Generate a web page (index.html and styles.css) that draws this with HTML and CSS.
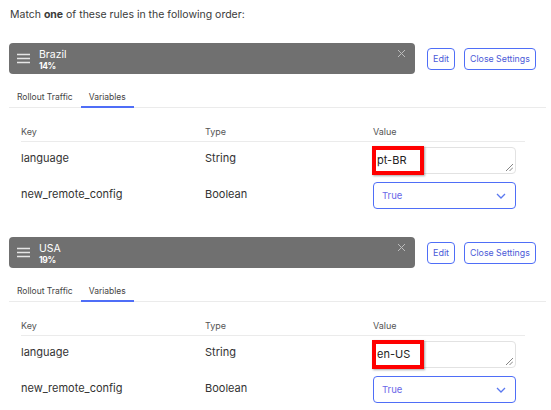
FILE: index.html
```html
<!DOCTYPE html>
<html>
<head>
<meta charset="utf-8">
<link rel="stylesheet" href="styles.css">
</head>
<body>
<div class="page">
  <p class="intro">Match <b>one</b> of these rules in the following order:</p>

  <section class="rule">
    <div class="rule-head">
      <div class="bar">
        <svg class="menu" width="13" height="11" viewBox="0 0 13 11"><path d="M0 1.5h13M0 5.5h13M0 9.5h13" stroke="#e6e6e6" stroke-width="1.4"/></svg>
        <div class="bar-text">
          <div class="bar-title">Brazil</div>
          <div class="bar-pct">14%</div>
        </div>
        <svg class="close" width="9" height="9" viewBox="0 0 9 9"><path d="M1 1l7 7M8 1l-7 7" stroke="#bdbdbd" stroke-width="1"/></svg>
      </div>
      <button class="btn">Edit</button>
      <button class="btn">Close Settings</button>
    </div>
    <div class="tabs">
      <div class="tab">Rollout Traffic</div>
      <div class="tab active">Variables</div>
    </div>
    <div class="table">
      <div class="thead">
        <div class="c-key">Key</div><div class="c-type">Type</div><div class="c-val">Value</div>
      </div>
      <div class="trow r1">
        <div class="c-key">language</div><div class="c-type">String</div>
        <div class="c-val"><div class="ta"><span class="hl">pt-BR</span><svg class="grip" width="7" height="7" viewBox="0 0 7 7"><path d="M7 0L0 7M7 3.5L3.5 7" stroke="#666" stroke-width="0.8"/></svg></div></div>
      </div>
      <div class="trow r2">
        <div class="c-key">new_remote_config</div><div class="c-type">Boolean</div>
        <div class="c-val"><div class="sel"><span>True</span><svg width="10" height="6" viewBox="0 0 10 6"><path d="M1 1l4 4 4-4" fill="none" stroke="#5a78f0" stroke-width="1.3"/></svg></div></div>
      </div>
    </div>
  </section>

  <section class="rule second">
    <div class="rule-head">
      <div class="bar">
        <svg class="menu" width="13" height="11" viewBox="0 0 13 11"><path d="M0 1.5h13M0 5.5h13M0 9.5h13" stroke="#e6e6e6" stroke-width="1.4"/></svg>
        <div class="bar-text">
          <div class="bar-title">USA</div>
          <div class="bar-pct">19%</div>
        </div>
        <svg class="close" width="9" height="9" viewBox="0 0 9 9"><path d="M1 1l7 7M8 1l-7 7" stroke="#bdbdbd" stroke-width="1"/></svg>
      </div>
      <button class="btn">Edit</button>
      <button class="btn">Close Settings</button>
    </div>
    <div class="tabs">
      <div class="tab">Rollout Traffic</div>
      <div class="tab active">Variables</div>
    </div>
    <div class="table">
      <div class="thead">
        <div class="c-key">Key</div><div class="c-type">Type</div><div class="c-val">Value</div>
      </div>
      <div class="trow r1">
        <div class="c-key">language</div><div class="c-type">String</div>
        <div class="c-val"><div class="ta"><span class="hl">en-US</span><svg class="grip" width="7" height="7" viewBox="0 0 7 7"><path d="M7 0L0 7M7 3.5L3.5 7" stroke="#666" stroke-width="0.8"/></svg></div></div>
      </div>
      <div class="trow r2">
        <div class="c-key">new_remote_config</div><div class="c-type">Boolean</div>
        <div class="c-val"><div class="sel"><span>True</span><svg width="10" height="6" viewBox="0 0 10 6"><path d="M1 1l4 4 4-4" fill="none" stroke="#5a78f0" stroke-width="1.3"/></svg></div></div>
      </div>
    </div>
  </section>
</div>
</body>
</html>
```
FILE: styles.css
```css
* { box-sizing: border-box; }
body {
  margin: 0;
  background: #fff;
  font-family: Inter, "Noto Sans", sans-serif;
  color: #333;
}
.page {
  width: 537px;
  margin-left: 9px;
}
.intro {
  margin: 0;
  padding-top: 8px;
  padding-left: 1px;
  height: 43px;
  font-size: 10.5px;
  line-height: 14px;
  color: #3a3a3a;
}
.intro b { font-weight: 700; }
.rule-head {
  display: flex;
  align-items: center;
}
.bar {
  width: 406px;
  height: 31px;
  background: #707070;
  border-radius: 4px;
  display: flex;
  align-items: center;
  padding-left: 8px;
  padding-right: 9px;
  position: relative;
}
.menu { margin-right: 9px; }
.bar-text { flex: 1; color: #fff; }
.bar-title { font-size: 10.5px; line-height: 12px; margin-top: 2px; }
.bar-pct { font-size: 8.5px; font-weight: 700; line-height: 10px; letter-spacing: -0.4px; }
.close { align-self: flex-start; margin-top: 6px; }
.btn {
  height: 22px;
  border: 1px solid #4f6ef7;
  border-radius: 4px;
  background: #fff;
  color: #4b5ad8;
  font-family: Inter, sans-serif;
  font-size: 9px;
  padding: 0 5px;
  margin-left: 12px;
  cursor: pointer;
}
.btn + .btn { margin-left: 9px; padding: 0 5px; font-size: 8.8px; }
.tabs {
  display: flex;
  height: 34px;
  align-items: flex-end;
  border-bottom: 1px solid #ebebeb;
}
.tab {
  font-size: 8.5px;
  color: #444;
  padding: 0 8px 3px;
  line-height: 12px;
  border-bottom: 2px solid transparent;
  margin-bottom: -1px;
}
.tab.active { border-bottom-color: #4f6ef7; }
.table {
  margin-left: 12px;
  width: 504px;
}
.thead, .trow {
  display: grid;
  grid-template-columns: 184px 168px 152px;
  align-items: center;
}
.thead {
  height: 34px;
  border-bottom: 1px solid #ebebeb;
  font-size: 9px;
  color: #555;
  padding-top: 14px;
}
.trow { font-size: 11px; color: #333; }
.r1 { height: 36px; }
.r1 .c-key, .r1 .c-type { margin-top: -4px; }
.r2 { height: 35px; }
.r2 .c-key, .r2 .c-type { margin-top: -4px; }
.ta {
  width: 143px;
  height: 27px;
  border: 1px solid #e2e2e2;
  border-radius: 4px;
  position: relative;
  display: flex;
  align-items: center;
  padding-left: 3px;
  margin-top: 1px;
}
.hl {
  display: inline-block;
  border: 4px solid #ff0000;
  padding: 3px 2px 3px 1px;
  margin-left: -5px;
  width: 52px;
  height: 29px;
  line-height: 15px;
  font-size: 11px;
  color: #222;
  box-shadow: 1px 1px 2px rgba(0,0,0,0.35);
  margin-top: -1px;
}
.grip { position: absolute; right: 2px; bottom: 2px; }
.sel {
  width: 143px;
  height: 27px;
  border: 1px solid #4f6ef7;
  border-radius: 4px;
  display: flex;
  align-items: center;
  justify-content: space-between;
  padding: 0 9px 0 8px;
  color: #6a67e8;
  font-size: 9.5px;
}
.second { margin-top: 24px; }
```
